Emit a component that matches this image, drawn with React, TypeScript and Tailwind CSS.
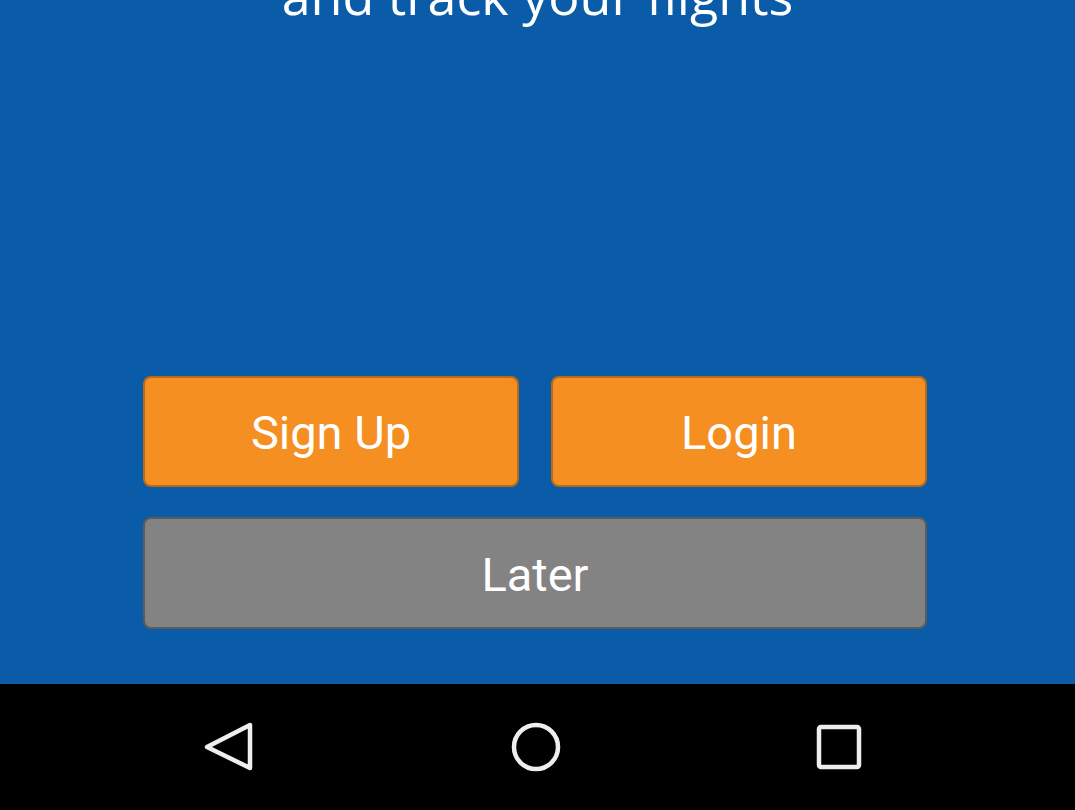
export default function App() {
  return (
    <div className="flex h-[810px] w-[1075px] flex-col overflow-hidden bg-black">
      <main className="flex h-[684px] flex-col overflow-hidden bg-[#0a5ba8]">
        <h1 className="-mt-[31px] text-center text-[52px] leading-none text-white [font-family:'Open_Sans',sans-serif]">
          and track your flights
        </h1>

        <div className="mt-auto mb-[55px] ml-[143px] flex w-[784px] flex-col gap-[30px] [font-family:Roboto,sans-serif]">
          <div className="flex gap-[32px]">
            <button className="h-[111px] flex-1 rounded-lg border-2 border-black/25 bg-[#f58f21] pt-1 text-[47px] text-white">
              Sign Up
            </button>
            <button className="h-[111px] flex-1 rounded-lg border-2 border-black/25 bg-[#f58f21] pt-1 text-[47px] text-white">
              Login
            </button>
          </div>
          <button className="h-[112px] w-full rounded-lg border-2 border-black/30 bg-[#838383] pt-1 text-[47px] text-white">
            Later
          </button>
        </div>
      </main>

      {/* Android nav bar */}
      <nav className="flex h-[126px] items-center">
        <div className="flex w-full items-center justify-between pl-[203px] pr-[213px]">
          <svg width="52" height="52" viewBox="0 0 52 52" fill="none">
            <path
              d="M47 4 L47 47 L4 26 Z"
              stroke="#eeeeee"
              strokeWidth="4.5"
              strokeLinejoin="round"
            />
          </svg>
          <svg width="52" height="52" viewBox="0 0 52 52" fill="none">
            <circle cx="26" cy="26" r="22" stroke="#eeeeee" strokeWidth="4.5" />
          </svg>
          <svg width="46" height="46" viewBox="0 0 46 46" fill="none">
            <rect x="3" y="3" width="40" height="40" rx="2" stroke="#eeeeee" strokeWidth="4.5" />
          </svg>
        </div>
      </nav>
    </div>
  );
}
